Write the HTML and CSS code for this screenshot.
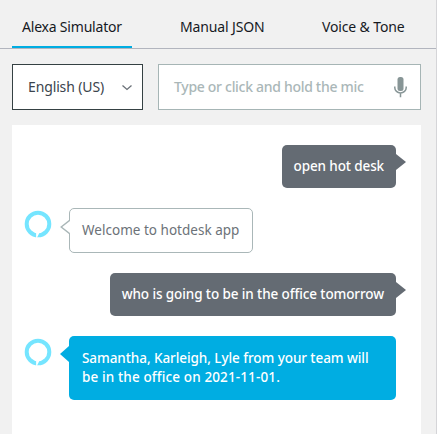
FILE: index.html
```html
<!DOCTYPE html>
<html lang="en">
<head>
<meta charset="utf-8">
<title>Alexa Simulator</title>
<link rel="stylesheet" href="styles.css">
</head>
<body>
<main class="simulator">
  <nav class="tabs">
    <a class="tab tab-active"><span class="t-alexa">Alexa Simulator</span></a>
    <a class="tab tab-json"><span class="t-json">Manual JSON</span></a>
    <a class="tab tab-voice"><span class="t-voice">Voice &amp; Tone</span></a>
  </nav>
  <div class="controls">
    <div class="select"><span class="t-lang">English (US)</span>
      <svg width="12" height="8" viewBox="0 0 12 8"><path d="M1.5 1.5 6 5.5l4.5-4" fill="none" stroke="#6a7077" stroke-width="1.3"/></svg>
    </div>
    <div class="input"><span class="t-hint">Type or click and hold the mic</span>
      <svg width="13" height="21" viewBox="0 0 13 21"><rect x="3.5" y="0" width="6" height="14" rx="2.5" fill="#879596"/><path d="M.8 9.5v1.2a5.7 5.2 0 0 0 11.4 0V9.5M6.5 16v4.2" fill="none" stroke="#879596" stroke-width="1.5"/></svg>
    </div>
  </div>
  <section class="chat">
    <div class="row user"><div class="bubble dark"><span class="t-open">open hot desk</span><svg class="tip tip-right" width="10" height="16"><path d="M0 0 10 8 0 16z" fill="#646b73"/></svg></div></div>
    <div class="row"><svg class="ring" width="28" height="28" viewBox="0 0 28 28"><circle cx="14" cy="14" r="11.3" fill="none" stroke="#75e5ff" stroke-width="4"/><path d="M12.1 28V22h3.7L12.8 28z" fill="#fff"/></svg>
      <div class="bubble light"><svg class="tip tip-left" width="10" height="16"><path d="M10 1 1.2 8 10 15" fill="#fff" stroke="#aab7b8" stroke-width="1.4"/></svg><span class="t-welcome">Welcome to hotdesk app</span></div></div>
    <div class="row user"><div class="bubble dark"><span class="t-who">who is going to be in the office tomorrow</span><svg class="tip tip-right" width="10" height="16"><path d="M0 0 10 8 0 16z" fill="#646b73"/></svg></div></div>
    <div class="row"><svg class="ring" width="28" height="28" viewBox="0 0 28 28"><circle cx="14" cy="14" r="11.3" fill="none" stroke="#75e5ff" stroke-width="4"/><path d="M12.1 28V22h3.7L12.8 28z" fill="#fff"/></svg>
      <div class="bubble blue"><svg class="tip tip-left" width="10" height="16"><path d="M10 0 1 8 10 16z" fill="#00ade2"/></svg><span class="t-sam">Samantha, Karleigh, Lyle from your team will</span><span class="t-date">be in the office on 2021-11-01.</span></div></div>
  </section>
</main>
</body>
</html>
```
FILE: styles.css
```css
* { box-sizing: border-box; }
body { margin: 0; background: #f1f1f1; font: 14px/19px "Noto Sans", "Open Sans", sans-serif; color: #16191f; overflow: hidden; }
.simulator { height: 434px; display: flex; flex-direction: column; border-right: 1px solid #d5d5d8; }
span { white-space: nowrap; }
svg { display: block; flex: none; }
.tabs { display: flex; height: 49px; flex: none; padding-left: 12px; border-bottom: 1px solid #b2b5be; }
.tab { height: 48px; padding-top: 17px; }
.tab-active { width: 120px; padding-left: 10px; border-bottom: 2px solid #00ade2; }
.tab-json { margin-left: 48px; width: 142px; }
.controls { display: flex; flex: none; gap: 15px; padding: 15px 15px 15px 12px; }
.select, .input { height: 46px; display: flex; align-items: center; justify-content: space-between; background: #fff; }
.select { width: 131px; padding: 0 9px 2px 15px; border: 1px solid #354143; color: #3b444d; }
.select svg { margin-top: 3px; }
.input { flex: 1; padding: 0 13px 0 15px; border: 1px solid #a6b5b5; color: #aab7b8; }
.chat { flex: 1; margin: 0 15px 0 12px; padding: 20px 25px 0 12px; background: #fff; display: flex; flex-direction: column; gap: 20px; }
.row { display: flex; align-items: flex-start; gap: 17px; }
.user { justify-content: flex-end; }
.bubble { position: relative; border-radius: 5px; padding: 12px; height: 43px; font-size: 13.5px; font-weight: 500; }
.dark { background: #646b73; color: #fff; }
.light { height: 45px; width: 184px; background: #fff; border: 1px solid #aab7b8; color: #6c7278; font-weight: 400; }
.blue { flex: 1; height: 64px; padding: 13px 13px 11px; background: #00ade2; color: #fff; display: flex; flex-direction: column; }
.ring { margin-top: 2px; }
.tip { position: absolute; }
.tip-right { left: 100%; top: 9px; }
.tip-left { right: 100%; top: 10px; }
.t-alexa { letter-spacing: -.2px; }
.t-json, .t-voice { letter-spacing: -.14px; }
.t-lang { letter-spacing: -.13px; }
.t-hint { letter-spacing: -.3px; font-weight: 500; margin-top: -1px; }
.t-open { letter-spacing: -.12px; }
.t-who { letter-spacing: -.1px; }
.t-welcome { letter-spacing: .02px; }
.t-sam { letter-spacing: -.07px; }
.t-date { letter-spacing: .13px; }
```
